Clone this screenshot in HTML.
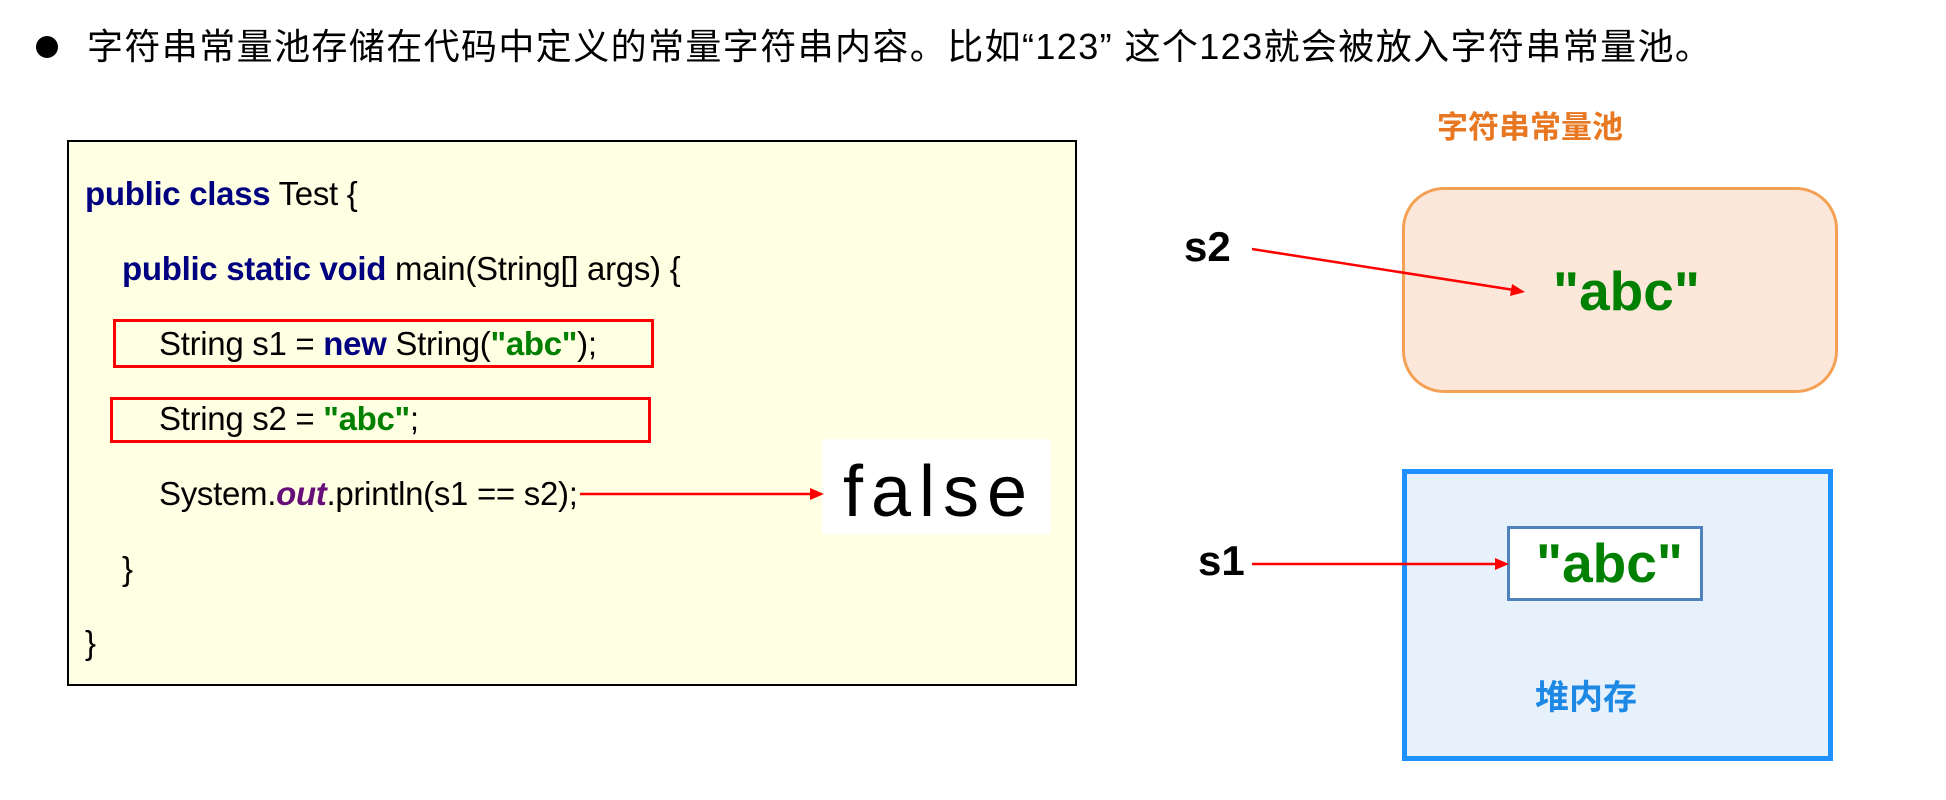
<!DOCTYPE html>
<html><head><meta charset="utf-8"><style>
body{margin:0;width:1946px;height:800px;background:#fff;position:relative;overflow:hidden;font-family:"Liberation Sans","Noto Sans CJK SC",sans-serif}
.a{position:absolute;white-space:nowrap}
.code{position:absolute;left:67px;top:140px;width:1006px;height:542px;background:#ffffe3;border:2px solid #000}
.ln{position:absolute;font-size:33px;line-height:36px;color:#000;white-space:nowrap;letter-spacing:-0.3px}
.k{color:#000080;font-weight:bold}
.s{color:#008000;font-weight:bold}
.rb{position:absolute;border:3px solid #f00}
.abc{color:#008000;font-weight:bold;font-size:55px}
</style></head><body>
<div class="a" style="left:36px;top:36px;width:22px;height:22px;border-radius:50%;background:#000"></div>
<div class="a" style="left:87px;top:25px;font-size:36px;line-height:44px;color:#000;letter-spacing:1.4px">字符串常量池存储在代码中定义的常量字符串内容。比如“123” 这个123就会被放入字符串常量池。</div>

<div class="code">
<div class="ln" style="left:16px;top:34px"><span class="k">public class</span> Test {</div>
<div class="ln" style="left:53px;top:109px"><span class="k">public static void</span> main(String[] args) {</div>
<div class="ln" style="left:90px;top:184px">String s1 = <span class="k">new</span> String(<span class="s">"abc"</span>);</div>
<div class="ln" style="left:90px;top:259px">String s2 = <span class="s">"abc"</span>;</div>
<div class="ln" style="left:90px;top:334px">System.<i style="color:#660e7a;font-weight:bold">out</i>.println(s1 == s2);</div>
<div class="ln" style="left:53px;top:409px">}</div>
<div class="ln" style="left:16px;top:483px">}</div>
</div>
<div class="rb" style="left:113px;top:319px;width:535px;height:43px"></div>
<div class="rb" style="left:110px;top:397px;width:535px;height:40px"></div>
<div class="a" style="left:822px;top:439px;width:229px;height:95px;background:#fff"></div>
<div class="a" style="left:843px;top:452px;font-size:72px;line-height:80px;letter-spacing:8px;color:#000">false</div>

<div class="a" style="left:1437px;top:109px;font-size:31px;line-height:38px;font-weight:bold;color:#e87722">字符串常量池</div>
<div class="a" style="left:1402px;top:187px;width:430px;height:200px;background:#fce8da;border:3px solid #f4a156;border-radius:42px"></div>
<div class="a abc" style="left:1553px;top:258px;line-height:66px">"abc"</div>
<div class="a" style="left:1184px;top:222px;font-size:42px;font-weight:bold;line-height:50px">s2</div>

<div class="a" style="left:1402px;top:469px;width:421px;height:282px;background:#e6f1fc;border:5px solid #1e90ff"></div>
<div class="a" style="left:1507px;top:526px;width:190px;height:69px;background:#fff;border:3px solid #4f81bd"></div>
<div class="a abc" style="left:1536px;top:530px;line-height:66px">"abc"</div>
<div class="a" style="left:1198px;top:536px;font-size:42px;font-weight:bold;line-height:50px">s1</div>
<div class="a" style="left:1535px;top:677px;font-size:34px;line-height:42px;font-weight:bold;color:#1e88e5">堆内存</div>

<svg class="a" style="left:0;top:0" width="1946" height="800">
<g stroke="#f00" stroke-width="2.5" fill="#f00">
<line x1="580" y1="494" x2="812" y2="494"/><polygon points="824,494 810,488 810,500" stroke="none"/>
<line x1="1252" y1="249" x2="1514" y2="290"/><polygon points="1525,292 1512,284 1510,296" stroke="none"/>
<line x1="1252" y1="564" x2="1497" y2="564"/><polygon points="1509,564 1495,558 1495,570" stroke="none"/>
</g></svg>
</body></html>
